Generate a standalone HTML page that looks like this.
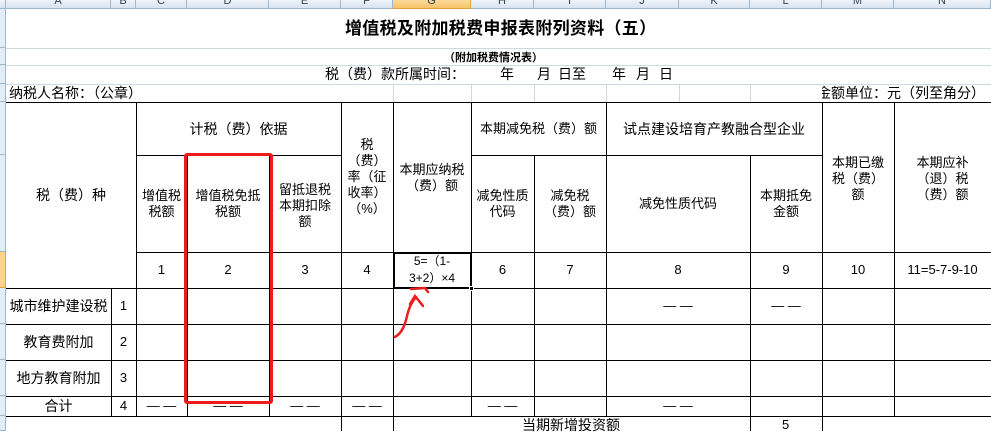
<!DOCTYPE html>
<html><head><meta charset="utf-8"><style>
*{margin:0;padding:0;box-sizing:border-box}
body{width:991px;height:431px;overflow:hidden;background:#fff;position:relative;font-family:"Liberation Sans","Noto Sans CJK SC","WenQuanYi Zen Hei",sans-serif;font-size:13px;color:#000}
.a{position:absolute}
.h{position:absolute;height:1px;background:#000}
.v{position:absolute;width:1px;background:#000}
.g{background:#d0d7e5}
.c{position:absolute;display:flex;align-items:center;justify-content:center;text-align:center;line-height:16px;white-space:nowrap}
.t{position:absolute;text-align:center;line-height:16px}
.ch{position:absolute;top:0;height:9px;background:linear-gradient(#eef3fa,#d8e3f1);border-right:1px solid #9eb6ce;border-bottom:1px solid #9eb6ce;font-size:11px;color:#345;line-height:0px;text-align:center;overflow:hidden}
.rh{position:absolute;left:0;width:6px;background:#e4ecf7;border-right:1px solid #9eb6ce;border-bottom:1px solid #9eb6ce}
</style></head><body>
<div class="ch" style="left:0;width:6px"></div>
<div class="ch" style="left:6px;width:105px"><span style="position:relative;top:1px">A</span></div>
<div class="ch" style="left:111px;width:25px"><span style="position:relative;top:1px">B</span></div>
<div class="ch" style="left:136px;width:51px"><span style="position:relative;top:1px">C</span></div>
<div class="ch" style="left:187px;width:82px"><span style="position:relative;top:1px">D</span></div>
<div class="ch" style="left:269px;width:72px"><span style="position:relative;top:1px">E</span></div>
<div class="ch" style="left:341px;width:52px"><span style="position:relative;top:1px">F</span></div>
<div class="ch" style="left:393px;width:78px;background:linear-gradient(#fbd99a,#f6c36a);border-color:#e3a23c"><span style="position:relative;top:1px">G</span></div>
<div class="ch" style="left:471px;width:63px"><span style="position:relative;top:1px">H</span></div>
<div class="ch" style="left:534px;width:72px"><span style="position:relative;top:1px">I</span></div>
<div class="ch" style="left:606px;width:73px"><span style="position:relative;top:1px">J</span></div>
<div class="ch" style="left:679px;width:71px"><span style="position:relative;top:1px">K</span></div>
<div class="ch" style="left:750px;width:72px"><span style="position:relative;top:1px">L</span></div>
<div class="ch" style="left:822px;width:72px"><span style="position:relative;top:1px">M</span></div>
<div class="ch" style="left:894px;width:97px"><span style="position:relative;top:1px">N</span></div>
<div class="rh" style="top:9px;height:39px"></div>
<div class="rh" style="top:48px;height:17px"></div>
<div class="rh" style="top:65px;height:19px"></div>
<div class="rh" style="top:84px;height:18px"></div>
<div class="rh" style="top:102px;height:53px"></div>
<div class="rh" style="top:155px;height:97px"></div>
<div class="rh" style="top:252px;height:36px;background:#fcd48c;border-color:#e3a23c"></div>
<div class="rh" style="top:288px;height:36px"></div>
<div class="rh" style="top:324px;height:36px"></div>
<div class="rh" style="top:360px;height:36px"></div>
<div class="rh" style="top:396px;height:20px"></div>
<div class="rh" style="top:416px;height:15px"></div>
<div class="h g" style="left:6px;width:985px;top:48px"></div>
<div class="h g" style="left:6px;width:985px;top:65px"></div>
<div class="h g" style="left:6px;width:985px;top:84px"></div>
<div class="v g" style="left:393px;top:84px;height:18px"></div>
<div class="v g" style="left:471px;top:84px;height:18px"></div>
<div class="v g" style="left:534px;top:84px;height:18px"></div>
<div class="v g" style="left:606px;top:84px;height:18px"></div>
<div class="v g" style="left:679px;top:84px;height:18px"></div>
<div class="v g" style="left:750px;top:84px;height:18px"></div>
<div class="a" style="left:345px;top:18px;font-size:17px;font-weight:bold;line-height:22px;letter-spacing:0.3px">增值税及附加税费申报表附列资料（五）</div>
<div class="a" style="left:444px;top:52px;font-size:11px;font-weight:bold;line-height:12px">（附加税费情况表）</div>
<div class="a" style="left:325px;top:66px;font-size:14px;line-height:17px">税（费）款所属时间：</div>
<div class="a" style="left:500px;top:66px;font-size:14px;line-height:17px">年</div>
<div class="a" style="left:537px;top:66px;font-size:14px;line-height:17px">月</div>
<div class="a" style="left:558px;top:66px;font-size:14px;line-height:17px">日至</div>
<div class="a" style="left:612px;top:66px;font-size:14px;line-height:17px">年</div>
<div class="a" style="left:636px;top:66px;font-size:14px;line-height:17px">月</div>
<div class="a" style="left:659px;top:66px;font-size:14px;line-height:17px">日</div>
<div class="a" style="left:9px;top:85px;font-size:14px;line-height:17px">纳税人名称：（公章）</div>
<div class="a" style="left:822px;top:85px;width:169px;height:17px;overflow:hidden;font-size:14px;line-height:17px;white-space:nowrap"><span style="margin-left:-5px">金额单位：元（列至角分）</span></div>
<div class="h" style="left:6px;width:985px;top:102px"></div>
<div class="h" style="left:136px;width:205px;top:155px"></div>
<div class="h" style="left:471px;width:351px;top:155px"></div>
<div class="h" style="left:136px;width:855px;top:252px"></div>
<div class="h" style="left:6px;width:985px;top:288px"></div>
<div class="h" style="left:6px;width:985px;top:324px"></div>
<div class="h" style="left:6px;width:985px;top:360px"></div>
<div class="h" style="left:6px;width:985px;top:396px"></div>
<div class="h" style="left:6px;width:985px;top:416px"></div>
<div class="v" style="left:111px;top:288px;height:128px"></div>
<div class="v" style="left:136px;top:102px;height:314px"></div>
<div class="v" style="left:187px;top:155px;height:261px"></div>
<div class="v" style="left:269px;top:155px;height:261px"></div>
<div class="v" style="left:341px;top:102px;height:329px"></div>
<div class="v" style="left:393px;top:102px;height:329px"></div>
<div class="v" style="left:471px;top:102px;height:314px"></div>
<div class="v" style="left:534px;top:155px;height:261px"></div>
<div class="v" style="left:606px;top:102px;height:314px"></div>
<div class="v" style="left:750px;top:155px;height:276px"></div>
<div class="v" style="left:822px;top:102px;height:329px"></div>
<div class="v" style="left:894px;top:102px;height:314px"></div>
<div class="c" style="left:6px;top:102px;width:130px;height:186px;font-size:14px">税（费）种</div>
<div class="c" style="left:136px;top:102px;width:205px;height:53px;font-size:14px">计税（费）依据</div>
<div class="c" style="left:136px;top:155px;width:51px;height:97px">增值税<br>税额</div>
<div class="c" style="left:187px;top:155px;width:82px;height:97px">增值税免抵<br>税额</div>
<div class="c" style="left:269px;top:155px;width:72px;height:97px;padding-top:4px">留抵退税<br>本期扣除<br>额</div>
<div class="t" style="left:341px;top:137px;width:52px">税<br>（费）<br>率（征<br>收率）<br>（%）</div>
<div class="t" style="left:393px;top:162px;width:78px">本期应纳税<br>（费）额</div>
<div class="c" style="left:471px;top:102px;width:135px;height:53px">本期减免税（费）额</div>
<div class="c" style="left:471px;top:155px;width:63px;height:97px">减免性质<br>代码</div>
<div class="c" style="left:534px;top:155px;width:72px;height:97px">减免税<br>（费）额</div>
<div class="c" style="left:606px;top:102px;width:216px;height:53px;font-size:14px">试点建设培育产教融合型企业</div>
<div class="c" style="left:606px;top:155px;width:144px;height:97px">减免性质代码</div>
<div class="c" style="left:750px;top:155px;width:72px;height:97px">本期抵免<br>金额</div>
<div class="t" style="left:822px;top:155px;width:72px">本期已缴<br>税（费）<br>额</div>
<div class="t" style="left:894px;top:155px;width:97px">本期应补<br>（退）税<br>（费）额</div>
<div class="c" style="left:136px;top:252px;width:51px;height:36px">1</div>
<div class="c" style="left:187px;top:252px;width:82px;height:36px">2</div>
<div class="c" style="left:269px;top:252px;width:72px;height:36px">3</div>
<div class="c" style="left:341px;top:252px;width:52px;height:36px">4</div>
<div class="c" style="left:393px;top:252px;width:78px;height:36px;font-size:12px;line-height:17px">5=（1-<br>3+2）×4</div>
<div class="c" style="left:471px;top:252px;width:63px;height:36px">6</div>
<div class="c" style="left:534px;top:252px;width:72px;height:36px">7</div>
<div class="c" style="left:606px;top:252px;width:144px;height:36px">8</div>
<div class="c" style="left:750px;top:252px;width:72px;height:36px">9</div>
<div class="c" style="left:822px;top:252px;width:72px;height:36px">10</div>
<div class="c" style="left:894px;top:252px;width:97px;height:36px">11=5-7-9-10</div>
<div class="c" style="left:6px;top:288px;width:105px;height:36px;font-size:14px">城市维护建设税</div>
<div class="c" style="left:111px;top:288px;width:25px;height:36px">1</div>
<div class="c" style="left:6px;top:324px;width:105px;height:36px;font-size:14px">教育费附加</div>
<div class="c" style="left:111px;top:324px;width:25px;height:36px">2</div>
<div class="c" style="left:6px;top:360px;width:105px;height:36px;font-size:14px">地方教育附加</div>
<div class="c" style="left:111px;top:360px;width:25px;height:36px">3</div>
<div class="c" style="left:6px;top:396px;width:105px;height:20px;font-size:14px">合计</div>
<div class="c" style="left:111px;top:396px;width:25px;height:20px">4</div>
<div class="c" style="left:606px;top:288px;width:144px;height:36px">— —</div>
<div class="c" style="left:750px;top:288px;width:72px;height:36px">— —</div>
<div class="c" style="left:136px;top:396px;width:51px;height:20px">— —</div>
<div class="c" style="left:187px;top:396px;width:82px;height:20px">— —</div>
<div class="c" style="left:269px;top:396px;width:72px;height:20px">— —</div>
<div class="c" style="left:341px;top:396px;width:52px;height:20px">— —</div>
<div class="c" style="left:471px;top:396px;width:63px;height:20px">— —</div>
<div class="c" style="left:606px;top:396px;width:144px;height:20px">— —</div>
<div class="a" style="left:522px;top:417px;font-size:14px;line-height:17px">当期新增投资额</div>
<div class="a" style="left:782px;top:417px;line-height:16px">5</div>
<div class="a" style="left:393px;top:252px;width:79px;height:37px;border:2px solid #000"></div>
<div class="a" style="left:395px;top:254px;width:75px;height:33px;border:1px solid #fff"></div>
<div class="a" style="left:469px;top:286px;width:5px;height:5px;background:#000;border:1px solid #fff"></div>
<div class="a" style="left:184px;top:153px;width:89px;height:251px;border:3px solid #ee1c1c;border-radius:3px"></div>
<svg class="a" style="left:0;top:0" width="991" height="431"><g fill="none" stroke="#ee1c1c" stroke-width="2.5" stroke-linecap="round"><path d="M395 337 C402 333 405 325 407 316 C409 308 411 303 416 297"/><path d="M410 304 L415 296 L423 306"/><path d="M411 289 L425 288 L428 292"/></g></svg>
</body></html>
